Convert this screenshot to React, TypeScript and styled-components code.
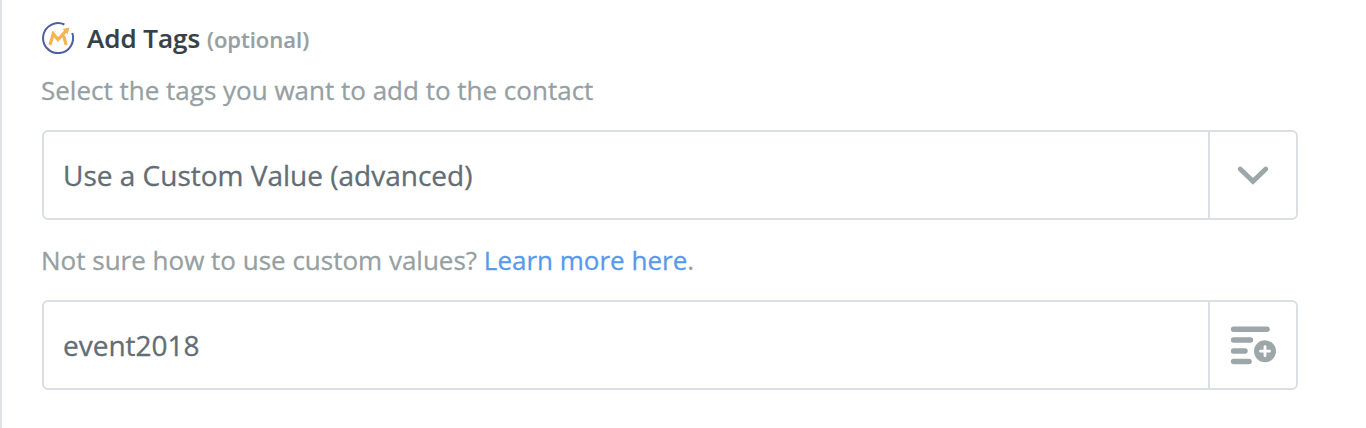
import React from "react";
import styled, { createGlobalStyle } from "styled-components";

const GlobalStyle = createGlobalStyle`
  *, *::before, *::after { box-sizing: border-box; }
  body {
    margin: 0;
    background: #fff;
    font-family: "Open Sans", "Noto Sans", sans-serif;
    -webkit-font-smoothing: antialiased;
  }
`;

const Panel = styled.section`
  display: flex;
  flex-direction: column;
  min-height: 428px;
  padding: 20px 68px 0 40px;
  border-left: 2px solid #dfe3e8;
`;

const Header = styled.header`
  display: flex;
  align-items: center;
  height: 36px;
`;

const Title = styled.h2`
  margin: 0 0 0 13px;
  font-size: 26px;
  line-height: 36px;
  font-weight: 600;
  color: #354047;
  -webkit-text-stroke: 0.2px currentColor;
  white-space: nowrap;
`;

const Optional = styled.span`
  font-size: 22px;
  color: #969fa2;
`;

const Help = styled.p<{ $top: number; $bottom: number }>`
  margin: ${(p) => p.$top}px 0 ${(p) => p.$bottom}px -1px;
  font-size: 26px;
  line-height: 36px;
  color: #969fa2;
  -webkit-text-stroke: 0.3px currentColor;
  white-space: nowrap;
`;

const Link = styled.a`
  color: #5899ec;
  text-decoration: none;
`;

const Field = styled.div`
  display: flex;
  height: 90px;
  border: 2px solid #dadfe3;
  border-radius: 6px;
`;

const Value = styled.div`
  flex: 1;
  padding-left: 19px;
  font-size: 28px;
  line-height: 86px;
  color: #626d74;
  -webkit-text-stroke: 0.3px currentColor;
  white-space: nowrap;
`;

const FieldButton = styled.button`
  display: flex;
  align-items: center;
  justify-content: center;
  width: 88px;
  padding: 0;
  border: 0;
  border-left: 2px solid #dadfe3;
  background: none;
  color: #9da6a9;
`;

function Logo() {
  return (
    <svg width="32" height="32" viewBox="0 0 32 32" fill="none">
      <path d="M22.4 2.5A15 15 0 1 0 30.2 11" stroke="#4e5e9e" strokeWidth="2" />
      <path d="M8 23 11.2 11.8 16 17.6 24.8 8.2" stroke="#f3b64f" strokeWidth="3.2" />
      <path d="M20.6 7 27.4 5.4 25.8 12.2Z" fill="#f3b64f" />
      <path d="M21.6 13.8 24.2 23" stroke="#f3b64f" strokeWidth="3.2" />
    </svg>
  );
}

function Chevron() {
  return (
    <svg width="86" height="86" viewBox="0 0 86 86" fill="none">
      <path
        d="M30.2 37 43 49.3 55.8 37"
        stroke="currentColor"
        strokeWidth="4.8"
        strokeLinecap="round"
      />
    </svg>
  );
}

function InsertField() {
  return (
    <svg width="86" height="86" viewBox="0 0 86 86" fill="none">
      <path
        d="M23.6 27.2H57M23.6 38.1H40.5M23.6 48.9H35M23.6 59.5H39"
        stroke="currentColor"
        strokeWidth="5.5"
        strokeLinecap="round"
      />
      <circle cx="55" cy="49.2" r="11" fill="currentColor" />
      <path d="M55 44.7V53.7M50.5 49.2H59.5" stroke="#fff" strokeWidth="2.8" strokeLinecap="round" />
    </svg>
  );
}

export default function App() {
  return (
    <>
      <GlobalStyle />
      <Panel>
        <Header>
          <Logo />
          <Title>
            Add Tags <Optional>(optional)</Optional>
          </Title>
        </Header>
        <Help $top={16} $bottom={22}>
          Select the tags you want to add to the contact
        </Help>
        <Field>
          <Value>Use a Custom Value (advanced)</Value>
          <FieldButton aria-label="Open options">
            <Chevron />
          </FieldButton>
        </Field>
        <Help $top={22} $bottom={22}>
          Not sure how to use custom values? <Link>Learn more here</Link>.
        </Help>
        <Field>
          <Value>event2018</Value>
          <FieldButton aria-label="Insert a field">
            <InsertField />
          </FieldButton>
        </Field>
      </Panel>
    </>
  );
}
